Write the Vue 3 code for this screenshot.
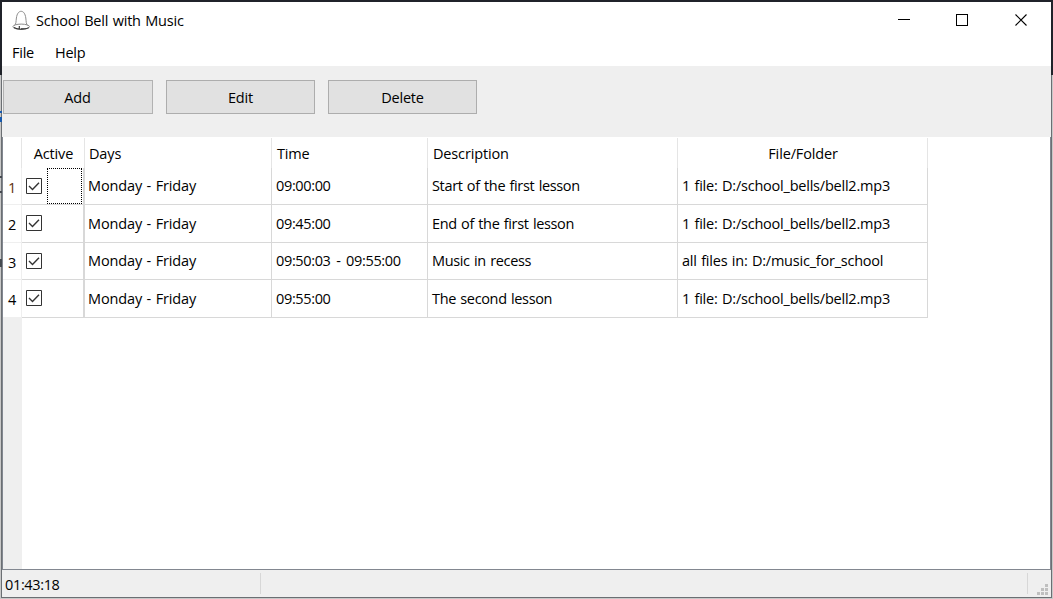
<script setup>
import { ref } from 'vue'

const menus = ref(['File', 'Help'])
const actions = ref(['Add', 'Edit', 'Delete'])
const columns = ref([
  { label: 'Active', cls: 'center' },
  { label: 'Days', cls: '' },
  { label: 'Time', cls: '' },
  { label: 'Description', cls: '' },
  { label: 'File/Folder', cls: 'center' },
])
const bells = ref([
  { days: 'Monday - Friday', time: '09:00:00', description: 'Start of the first lesson', file: '1 file: D:/school_bells/bell2.mp3' },
  { days: 'Monday - Friday', time: '09:45:00', description: 'End of the first lesson', file: '1 file: D:/school_bells/bell2.mp3' },
  { days: 'Monday - Friday', time: '09:50:03 - 09:55:00', description: 'Music in recess', file: 'all files in: D:/music_for_school' },
  { days: 'Monday - Friday', time: '09:55:00', description: 'The second lesson', file: '1 file: D:/school_bells/bell2.mp3' },
])
</script>

<template>
  <div class="desktop">
    <div class="window">
      <header class="titlebar">
        <svg class="bell" width="20" height="22" viewBox="0 0 20 22" fill="none">
          <path d="M2.500 15.500C4.200 14 3.900 11.500 4.400 8C5 3.300 7 1.300 9.100 1.300s4.100 2 4.700 6.700c.5 3.800.2 6.200 1.900 7.500" stroke="#8e8e8e" />
          <ellipse cx="9.200" cy="16.700" rx="8.300" ry="2.600" stroke="#8c8c8c" />
          <path d="M2 17.500c3 2.200 11 2.400 14.800.1M7.300 16v3.800M9 18.800h5" stroke="#303030" stroke-width="1.100" />
        </svg>
        <span class="title">School Bell with Music</span>
        <svg class="controls" width="150" height="40" viewBox="0 0 150 40" fill="none" stroke="#000" shape-rendering="crispEdges">
          <path d="M17 17.500h12M75.500 12.500h11v11h-11z" />
          <path d="M134.500 12.500l11 11M145.500 12.500l-11 11" shape-rendering="auto" stroke-width="1.100" />
        </svg>
      </header>
      <nav class="menubar">
        <span v-for="m in menus" :key="m">{{ m }}</span>
      </nav>
      <div class="toolbar">
        <button v-for="a in actions" :key="a">{{ a }}</button>
      </div>
      <main class="view">
        <div class="row head">
          <div class="corner"></div>
          <div v-for="c in columns" :key="c.label" class="cell" :class="c.cls"><span>{{ c.label }}</span></div>
        </div>
        <div v-for="(b, i) in bells" :key="i" class="row entry" :class="'entry-' + (i + 1)">
          <div class="index">{{ i + 1 }}</div>
          <div class="cell active">
            <svg width="16" height="16" viewBox="0 0 16 16" fill="none" stroke="#333">
              <path d="M.5.5h15v15H.5z" fill="#fff" />
              <path d="M3 8l3.500 3.500L13 4.800" stroke-width="1.400" />
            </svg>
            <i v-if="i === 0" class="focus"></i>
          </div>
          <div class="cell days"><span>{{ b.days }}</span></div>
          <div class="cell time"><span>{{ b.time }}</span></div>
          <div class="cell desc"><span>{{ b.description }}</span></div>
          <div class="cell file"><span>{{ b.file }}</span></div>
        </div>
        <div class="rest"></div>
      </main>
      <footer class="status">
        <div class="clock">01:43:18</div>
        <div class="message"></div>
        <svg width="11" height="11" viewBox="0 0 11 11" fill="#bfbfbf">
          <path d="M8 0h3v3H8zM4 4h3v3H4zM8 4h3v3H8zM0 8h3v3H0zM4 8h3v3H4zM8 8h3v3H8z" />
        </svg>
      </footer>
    </div>
  </div>
</template>

<style>
body { margin: 0; overflow: hidden; }
</style>

<style scoped>
* { box-sizing: border-box; }
.desktop {
  width: 1053px; height: 599px; padding: 2px;
  font: 14.5px/20px "Open Sans", "Noto Sans", sans-serif;
  letter-spacing: -0.35px; word-spacing: 0.9px; color: #000;
  background:
    linear-gradient(#1659ad, #1659ad) 0 111px / 2px 2px no-repeat,
    linear-gradient(#1659ad, #1659ad) 0 117px / 2px 5px no-repeat,
    linear-gradient(#454a50, #454a50) 0 176px / 2px 2px no-repeat,
    linear-gradient(#454a50, #454a50) 0 191px / 2px 2px no-repeat,
    linear-gradient(#454a50, #454a50) 0 259px / 2px 8px no-repeat,
    linear-gradient(#20232a, #20232a) 0 0 / 100% 75px no-repeat,
    linear-gradient(#6b6f73, #6b6f73) 1px 75px / 1051px 523px no-repeat,
    #c8c8c8;
}
.window { width: 1049px; height: 595px; background: #efefef; display: flex; flex-direction: column; }
.titlebar { height: 36px; background: #fff; display: flex; align-items: flex-start; }
.bell { margin: 8px 0 0 10px; }
.title { margin: 9px auto 0 4px; letter-spacing: -0.2px; }
.controls { margin-right: 20px; }
.menubar { height: 28px; background: #fff; display: flex; gap: 21px; padding: 5px 0 0 10px; letter-spacing: -0.25px; }
.toolbar { height: 71px; display: flex; gap: 13px; padding: 14px 0 0 1px; }
.toolbar button {
  width: 149px; height: 34px; border: 1px solid #adadad; border-radius: 0; background: #e1e1e1;
  padding: 2px 0 0; font: inherit; letter-spacing: -0.2px; color: #000;
}
.toolbar button:first-child { width: 150px; border-color: #b2b2b2; padding-right: 1px; }
.view { height: 432px; background: #fff; border: solid #828790; border-width: 0 1px; display: flex; flex-direction: column; }
.row { display: grid; grid-template-columns: 19px 63px 187px 156px 250px 250px; width: 925px; }
.head { height: 31px; padding-top: 1px; letter-spacing: -0.15px; }
.corner { border-right: 1px solid #e5e5e5; }
.cell { border-right: 1px solid #d8d8d8; border-bottom: 1px solid #d8d8d8; padding-left: 4px; display: flex; align-items: center; white-space: nowrap; min-width: 0; }
.head .cell { border-bottom: 0; border-right-color: #e5e5e5; padding: 2px 0 0 5px; }
.head .cell:nth-child(3) { padding-left: 4px; }
.head .center { justify-content: center; padding-left: 1px; }
.entry { height: 38px; }
.entry-1, .entry-3 { height: 37px; }
.index { border-right: 1px solid #efefef; border-bottom: 1px solid #efefef; display: flex; align-items: center; justify-content: center; padding-top: 3px; }
.entry-1 .index { color: #60300c; }
.days { padding-left: 3px; letter-spacing: -0.13px; }
.time { word-spacing: 2.2px; }
.file { letter-spacing: -0.22px; }
.active { border-right-width: 2px; }
.entry-2 .active, .entry-4 .active { padding-bottom: 1px; }
.focus { width: 35px; height: 36px; border: 1px dotted #000; margin-left: 5px; flex: none; }
.rest { width: 19px; flex: 1; background: #efefef; }
.status { height: 28px; border-top: 1px solid #828790; display: flex; }
.clock { width: 259px; height: 21px; margin-top: 3px; padding: 2px 0 0 3px; border-right: 1px solid #d7d7d7; }
.message { width: 767px; height: 21px; margin-top: 3px; border-right: 1px solid #d7d7d7; }
.status svg { margin: 14px 0 0 9px; }
</style>
